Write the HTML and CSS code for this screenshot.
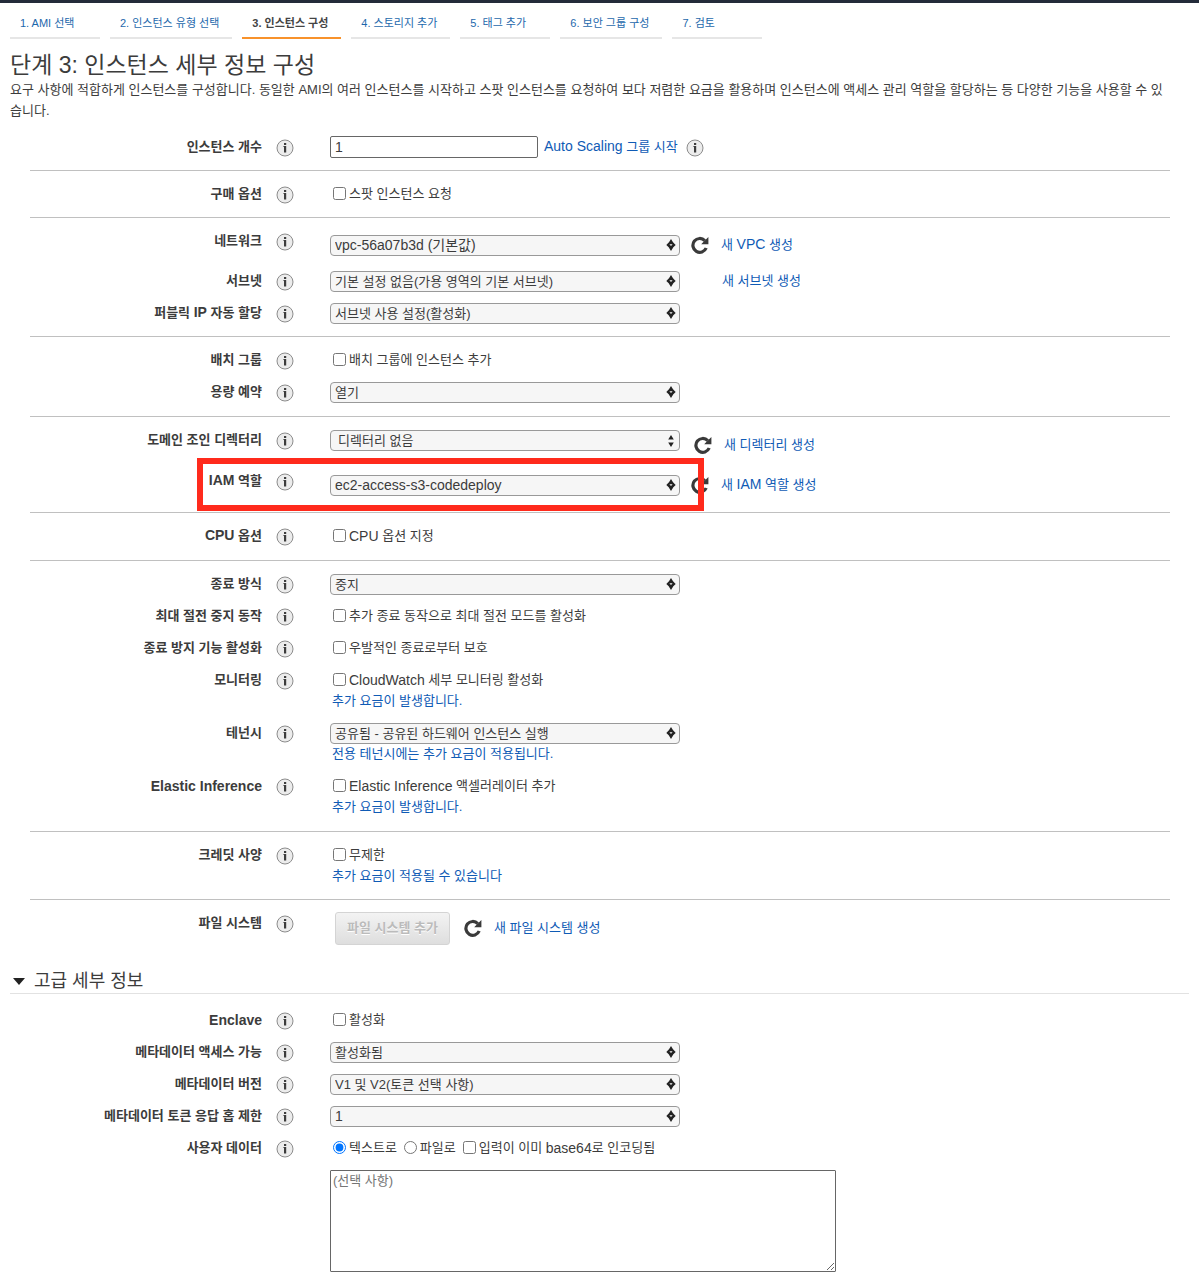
FILE: index.html
```html
<!DOCTYPE html>
<html lang="ko">
<head>
<meta charset="utf-8">
<meta name="viewport" content="width=device-width, initial-scale=1">
<title>단계 3: 인스턴스 세부 정보 구성</title>
<link rel="stylesheet" href="styles.css">
</head>
<body>
<svg class="sprite" aria-hidden="true">
  <symbol id="info" viewBox="0 0 18 18"><circle cx="9" cy="9" r="8" fill="#ececec" stroke="#8c8c8c"/><path d="M8 4h2.200v2H8zM8 7h2.200v6.500H8z" fill="#3c3c3c"/><path d="M7.200 7H8v1h-.8z" fill="#777"/></symbol>
  <symbol id="refresh" viewBox="0 0 18 18"><path d="M13.800 4.600A6.900 6.900 0 1 0 15.200 12" fill="none" stroke="#3a3a3a" stroke-width="3.200"/><path d="M17.400 1v7.200h-7.200l2.600-2.600z" fill="#3a3a3a"/></symbol>
  <symbol id="spin" viewBox="0 0 10 14"><path d="M5 1 7.800 5.500H2.200zM5 13 7.800 8.500H2.200z" fill="#222"/><path d="M0.300 7 2.500 4.800h5L9.700 7 7.500 9H2.500z" fill="#222"/><path d="M3.400 6.200h3.200L5 8z" fill="#f6f6f6"/></symbol>
  <symbol id="spin-split" viewBox="0 0 10 14"><path d="M5 1 7.800 5.500H2.200zM5 13 7.800 8.500H2.200z" fill="#222"/></symbol>
</svg>

<nav class="steps">
  <a class="step" href="#">1. AMI 선택</a>
  <a class="step" href="#">2. 인스턴스 유형 선택</a>
  <a class="step current" href="#" aria-current="step">3. 인스턴스 구성</a>
  <a class="step" href="#">4. 스토리지 추가</a>
  <a class="step" href="#">5. 태그 추가</a>
  <a class="step" href="#">6. 보안 그룹 구성</a>
  <a class="step" href="#">7. 검토</a>
</nav>

<main>
  <header class="intro">
    <h1>단계 3: 인스턴스 세부 정보 구성</h1>
    <p>요구 사항에 적합하게 인스턴스를 구성합니다. 동일한 AMI의 여러 인스턴스를 시작하고 스팟 인스턴스를 요청하여 보다 저렴한 요금을 활용하며 인스턴스에 액세스 관리 역할을 할당하는 등 다양한 기능을 사용할 수 있습니다.</p>
  </header>

  <form>
    <section class="group">
      <div class="row">
        <label class="name" for="count">인스턴스 개수</label>
        <svg class="info"><use href="#info"/></svg>
        <div class="control"><input class="text" id="count" type="text" value="1"><a class="beside" href="#"><span class="latin">Auto Scaling</span> 그룹 시작</a><svg class="info"><use href="#info"/></svg></div>
      </div>
    </section>

    <section class="group">
      <div class="row">
        <span class="name">구매 옵션</span>
        <svg class="info"><use href="#info"/></svg>
        <div class="control"><label class="tick"><input type="checkbox">스팟 인스턴스 요청</label></div>
      </div>
    </section>

    <section class="group">
      <div class="row tall">
        <label class="name" for="vpc">네트워크</label>
        <svg class="info"><use href="#info"/></svg>
        <div class="control"><span class="select"><select id="vpc" class="latin"><option>vpc-56a07b3d (기본값)</option></select><svg><use href="#spin"/></svg></span><button class="refresh" type="button" aria-label="새로 고침"><svg><use href="#refresh"/></svg></button><a href="#">새 <span class="latin">VPC</span> 생성</a></div>
      </div>
      <div class="row">
        <label class="name" for="subnet">서브넷</label>
        <svg class="info"><use href="#info"/></svg>
        <div class="control"><span class="select"><select id="subnet"><option>기본 설정 없음(가용 영역의 기본 서브넷)</option></select><svg><use href="#spin"/></svg></span><a class="no-refresh" href="#">새 서브넷 생성</a></div>
      </div>
      <div class="row">
        <label class="name" for="ip">퍼블릭 <span class="latin">IP</span> 자동 할당</label>
        <svg class="info"><use href="#info"/></svg>
        <div class="control"><span class="select"><select id="ip"><option>서브넷 사용 설정(활성화)</option></select><svg><use href="#spin"/></svg></span></div>
      </div>
    </section>

    <section class="group roomy">
      <div class="row">
        <span class="name">배치 그룹</span>
        <svg class="info"><use href="#info"/></svg>
        <div class="control"><label class="tick"><input type="checkbox">배치 그룹에 인스턴스 추가</label></div>
      </div>
      <div class="row">
        <label class="name" for="capacity">용량 예약</label>
        <svg class="info"><use href="#info"/></svg>
        <div class="control"><span class="select"><select id="capacity"><option>열기</option></select><svg><use href="#spin"/></svg></span></div>
      </div>
    </section>

    <section class="group">
      <div class="row taller">
        <label class="name" for="directory">도메인 조인 디렉터리</label>
        <svg class="info"><use href="#info"/></svg>
        <div class="control"><span class="select raised"><select id="directory" class="inset"><option>디렉터리 없음</option></select><svg><use href="#spin-split"/></svg></span><button class="refresh spaced" type="button" aria-label="새로 고침"><svg><use href="#refresh"/></svg></button><a href="#">새 디렉터리 생성</a></div>
      </div>
      <div class="row tall highlighted">
        <label class="name" for="iam"><span class="latin">IAM</span> 역할</label>
        <svg class="info"><use href="#info"/></svg>
        <div class="control"><span class="select"><select id="iam" class="latin"><option>ec2-access-s3-codedeploy</option></select><svg><use href="#spin"/></svg></span><button class="refresh" type="button" aria-label="새로 고침"><svg><use href="#refresh"/></svg></button><a href="#">새 <span class="latin">IAM</span> 역할 생성</a></div>
      </div>
    </section>

    <section class="group roomy">
      <div class="row">
        <span class="name"><span class="latin">CPU</span> 옵션</span>
        <svg class="info"><use href="#info"/></svg>
        <div class="control"><label class="tick"><input type="checkbox"><span class="latin">CPU</span> 옵션 지정</label></div>
      </div>
    </section>

    <section class="group roomy">
      <div class="row">
        <label class="name" for="shutdown">종료 방식</label>
        <svg class="info"><use href="#info"/></svg>
        <div class="control"><span class="select"><select id="shutdown"><option>중지</option></select><svg><use href="#spin"/></svg></span></div>
      </div>
      <div class="row">
        <span class="name">최대 절전 중지 동작</span>
        <svg class="info"><use href="#info"/></svg>
        <div class="control"><label class="tick"><input type="checkbox">추가 종료 동작으로 최대 절전 모드를 활성화</label></div>
      </div>
      <div class="row">
        <span class="name">종료 방지 기능 활성화</span>
        <svg class="info"><use href="#info"/></svg>
        <div class="control"><label class="tick"><input type="checkbox">우발적인 종료로부터 보호</label></div>
      </div>
      <div class="row">
        <span class="name">모니터링</span>
        <svg class="info"><use href="#info"/></svg>
        <div class="control"><label class="tick"><input type="checkbox"><span class="latin">CloudWatch</span> 세부 모니터링 활성화</label></div>
        <a class="note" href="#">추가 요금이 발생합니다.</a>
      </div>
      <div class="row">
        <label class="name" for="tenancy">테넌시</label>
        <svg class="info"><use href="#info"/></svg>
        <div class="control"><span class="select"><select id="tenancy"><option>공유됨 - 공유된 하드웨어 인스턴스 실행</option></select><svg><use href="#spin"/></svg></span></div>
        <a class="note" href="#">전용 테넌시에는 추가 요금이 적용됩니다.</a>
      </div>
      <div class="row">
        <span class="name latin">Elastic Inference</span>
        <svg class="info"><use href="#info"/></svg>
        <div class="control"><label class="tick"><input type="checkbox"><span class="latin">Elastic Inference</span> 액셀러레이터 추가</label></div>
        <a class="note" href="#">추가 요금이 발생합니다.</a>
      </div>
    </section>

    <section class="group">
      <div class="row">
        <span class="name">크레딧 사양</span>
        <svg class="info"><use href="#info"/></svg>
        <div class="control"><label class="tick"><input type="checkbox">무제한</label></div>
        <a class="note" href="#">추가 요금이 적용될 수 있습니다</a>
      </div>
    </section>

    <section class="group">
      <div class="row">
        <span class="name">파일 시스템</span>
        <svg class="info"><use href="#info"/></svg>
        <div class="control"><button class="add" type="button" disabled>파일 시스템 추가</button><button class="refresh spaced" type="button" aria-label="새로 고침"><svg><use href="#refresh"/></svg></button><a href="#">새 파일 시스템 생성</a></div>
      </div>
    </section>

    <h2><svg viewBox="0 0 12 7"><path d="M0 0h12L6 7z" fill="#222"/></svg>고급 세부 정보</h2>

    <section class="group">
      <div class="row">
        <span class="name latin">Enclave</span>
        <svg class="info"><use href="#info"/></svg>
        <div class="control"><label class="tick"><input type="checkbox">활성화</label></div>
      </div>
      <div class="row">
        <label class="name" for="meta">메타데이터 액세스 가능</label>
        <svg class="info"><use href="#info"/></svg>
        <div class="control"><span class="select"><select id="meta"><option>활성화됨</option></select><svg><use href="#spin"/></svg></span></div>
      </div>
      <div class="row">
        <label class="name" for="version">메타데이터 버전</label>
        <svg class="info"><use href="#info"/></svg>
        <div class="control"><span class="select"><select id="version"><option>V1 및 V2(토큰 선택 사항)</option></select><svg><use href="#spin"/></svg></span></div>
      </div>
      <div class="row">
        <label class="name" for="hops">메타데이터 토큰 응답 홉 제한</label>
        <svg class="info"><use href="#info"/></svg>
        <div class="control"><span class="select"><select id="hops" class="latin"><option>1</option></select><svg><use href="#spin"/></svg></span></div>
      </div>
      <div class="row">
        <label class="name" for="userdata">사용자 데이터</label>
        <svg class="info"><use href="#info"/></svg>
        <div class="control"><label class="tick"><input type="radio" name="source" checked>텍스트로</label><label class="tick"><input type="radio" name="source">파일로</label><label class="tick"><input type="checkbox">입력이 이미 <span class="latin">base64</span>로 인코딩됨</label></div>
        <textarea id="userdata" placeholder="(선택 사항)"></textarea>
      </div>
    </section>
  </form>
</main>
</body>
</html>
```

FILE: styles.css
```css
*, *::after { box-sizing: border-box; }

body {
  margin: 0;
  border-top: 3px solid #232b3a;
  background: #fff;
  color: #3c3c3c;
  font: 13px/20px "Liberation Sans", "Noto Sans CJK KR", sans-serif;
}

a { color: #0f5bb5; text-decoration: none; }
.sprite { display: none; }
.latin { font-size: 14px; line-height: 14px; }

/* Wizard steps */
.steps { display: flex; gap: 10px; padding: 10px 10px 0; }
.step {
  min-width: 90px;
  padding: 0 13px 4px 10px;
  border-bottom: 2px solid #e6e6e6;
  color: #1d68ac;
  font-size: 11px;
  white-space: nowrap;
}
.current { border-color: #f8922b; color: #444; font-weight: bold; }

/* Title and description */
.intro { padding: 12px 10px 0; }
h1 { margin: 0; font-size: 23px; font-weight: normal; line-height: 28px; }
p { margin: 0; padding-right: 20px; line-height: 21px; }

/* Form groups */
form { padding-top: 3px; }
.group {
  display: flex;
  flex-direction: column;
  gap: 12px;
  margin: 0 29px 0 30px;
  padding: 13px 0;
  border-bottom: 1px solid #c0c0c0;
}
.roomy { padding-bottom: 14px; }
.group:has(+ h2), .group:last-child { border-bottom: 0; }
.group:last-child { padding-bottom: 10px; }

.row {
  position: relative;
  display: grid;
  grid-template-columns: 232px 18px minmax(0, 1fr);
  column-gap: 14px;
}
.name { text-align: right; font-weight: bold; line-height: 20px; }
.info { width: 18px; height: 18px; margin-top: 2px; }
.control {
  display: flex;
  align-items: center;
  height: 20px;
  padding-left: 22px;
}
.tall .control { height: 28px; }
.taller .control { height: 29px; }
.note { grid-column: 3; margin-left: 24px; line-height: 21px; }

/* Fields */
input, select, textarea, button { margin: 0; color: inherit; font: inherit; }
.text { width: 208px; height: 22px; padding: 0 4px; border: 1px solid #666; border-radius: 2px; font-size: 14px; }
.beside { margin: 0 8px 0 6px; }
.select { display: grid; align-items: center; }
.select > * { grid-area: 1 / 1; }
.select svg { width: 10px; height: 14px; justify-self: end; margin-right: 4px; pointer-events: none; }
select {
  width: 350px;
  height: 21px;
  padding: 0 4px;
  border: 1px solid #999;
  border-radius: 4px;
  background: #f6f6f6;
  appearance: none;
  line-height: 19px;
}
select.latin { font-size: 14px; line-height: 19px; }
.inset { padding-left: 7px; }
.raised { align-self: flex-start; }

.tick { display: flex; align-items: center; margin-right: 4px; white-space: pre; }
.tick input { width: 13px; height: 13px; margin: 0 3px 2px; }

.refresh {
  display: flex;
  margin: 0 12px 0 11px;
  padding: 0;
  border: 0;
  background: none;
}
.spaced { margin-left: 14px; }
.refresh svg { width: 18px; height: 18px; }
.no-refresh { margin-left: 42px; }

.add {
  flex: none;
  height: 33px;
  margin-left: 5px;
  padding: 0 11px;
  border: 1px solid #d4d4d4;
  border-radius: 3px;
  background: linear-gradient(#f3f3f3, #dedede);
  color: #bbb;
  font-weight: bold;
  text-shadow: 0 1px 0 #fff;
}
.row:has(.add) .control { height: 30px; }

textarea {
  grid-column: 3;
  width: 506px;
  height: 102px;
  margin: 12px 0 0 22px;
  padding: 0 2px;
  border: 1px solid #666;
  border-radius: 1px;
}
textarea::placeholder { color: #757575; }

/* Red frame drawn over the IAM role row */
.highlighted::after {
  content: "";
  position: absolute;
  top: -13px;
  left: 167px;
  width: 507px;
  height: 53px;
  border: 6px solid #ff2a1c;
  pointer-events: none;
}

/* Advanced details */
h2 {
  display: flex;
  align-items: center;
  gap: 9px;
  margin: 13px 10px 3px;
  padding-left: 3px;
  border-bottom: 1px solid #e2e2e2;
  font-size: 18px;
  font-weight: normal;
  line-height: 24px;
}
h2 svg { width: 12px; height: 7px; }
```
